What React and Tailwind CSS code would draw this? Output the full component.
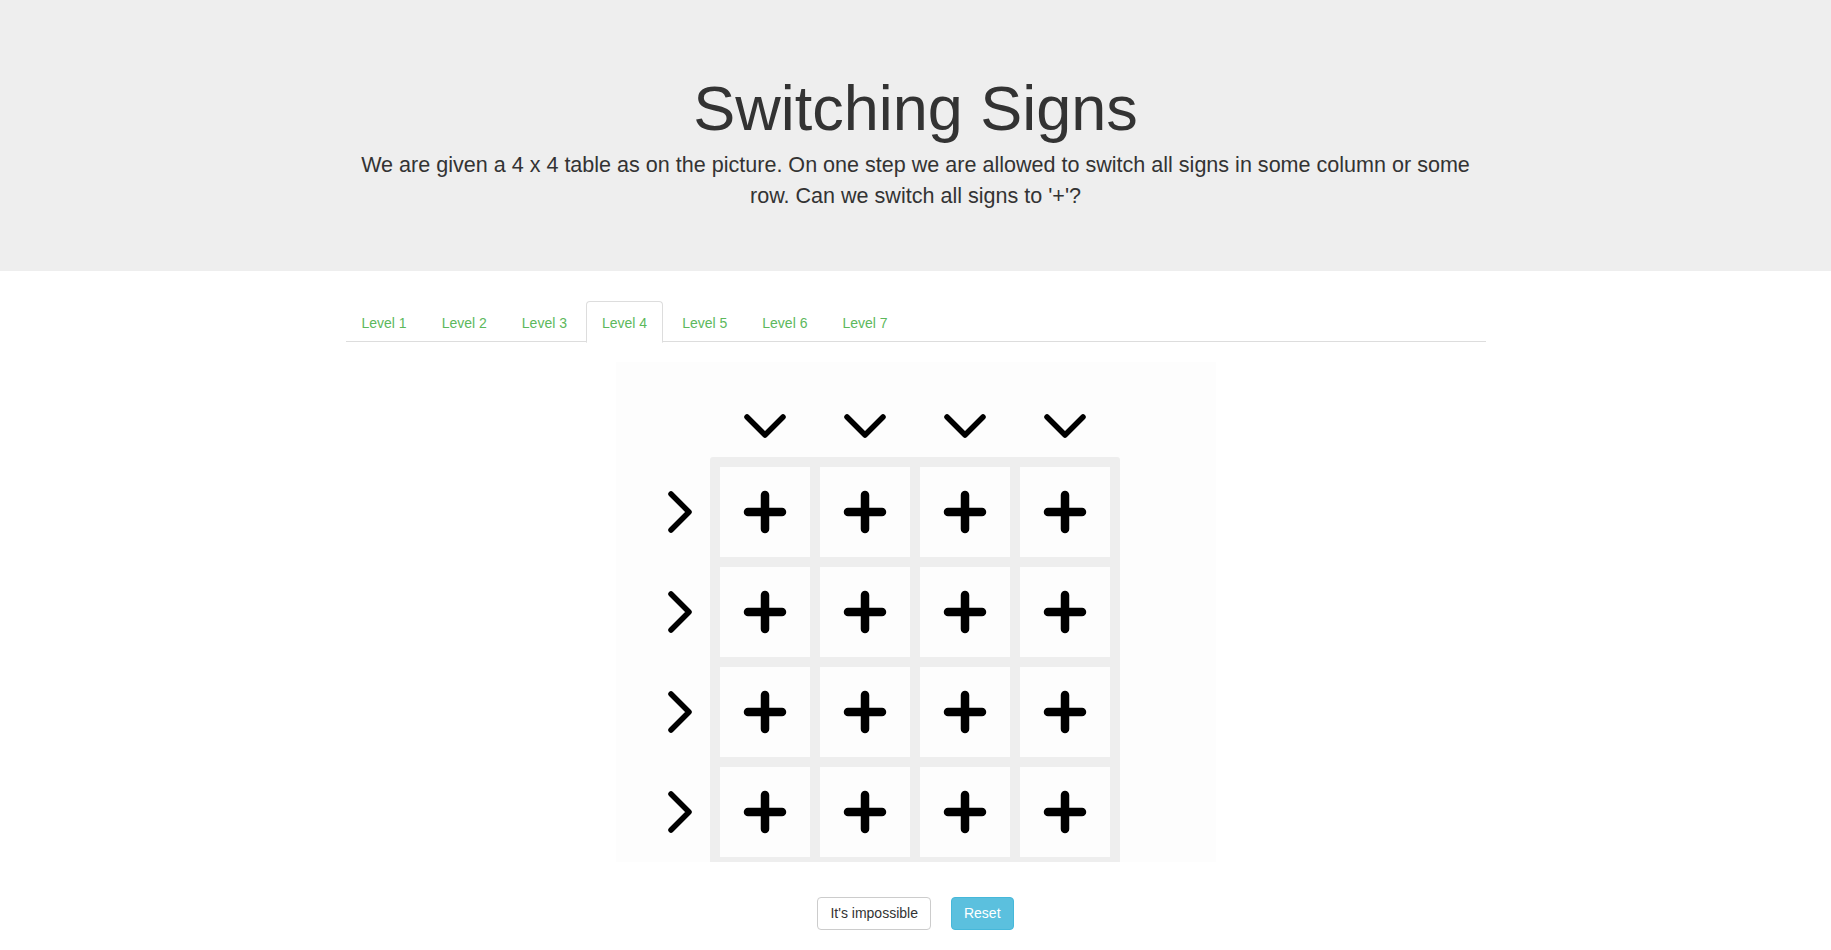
import React from "react";

function ChevronDown() {
  return (
    <svg width="48" height="30" viewBox="-24 -15 48 30" className="block">
      <path d="M-18 -9 L0 9 L18 -9" fill="none" stroke="#000" strokeWidth="5.5" strokeLinecap="round" strokeLinejoin="round" />
    </svg>
  );
}

function ChevronRight() {
  return (
    <svg width="30" height="48" viewBox="-15 -24 30 48" className="block">
      <path d="M-9 -18 L9 0 L-9 18" fill="none" stroke="#000" strokeWidth="5.5" strokeLinecap="round" strokeLinejoin="round" />
    </svg>
  );
}

function Plus() {
  return (
    <svg width="48" height="48" viewBox="-24 -24 48 48" className="block">
      <path d="M-17 0 L17 0 M0 -17 L0 17" fill="none" stroke="#000" strokeWidth="8.5" strokeLinecap="round" />
    </svg>
  );
}

export default function App() {
  const levels = [1, 2, 3, 4, 5, 6, 7];
  const idx = [0, 1, 2, 3];
  return (
    <div className="min-h-[950px] bg-white text-[#333] font-['Liberation_Sans',Arial,sans-serif]">
      <div className="bg-[#eeeeee] pt-[48px] pb-[45px] mb-[30px]">
        <div className="w-[1170px] mx-auto px-[15px] text-center">
          <h1 className="text-[63px] leading-[1.1] mt-[26px] mb-[7px] font-normal text-[#333]">Switching Signs</h1>
          <p className="text-[21.55px] leading-[30.3px] mb-[15px] text-[#333]">
            We are given a 4 x 4 table as on the picture. On one step we are allowed to switch all signs in some column or some row. Can we switch all signs to '+'?
          </p>
        </div>
      </div>
      <div className="w-[1170px] mx-auto px-[15px]">
        <ul className="flex border-b border-[#dddddd] h-[41px] text-[14px]">
          {levels.map((l) => (
            <li key={l} className="mr-[3px] -mb-px">
              <a
                className={
                  l === 4
                    ? "block px-[15px] pt-[11px] pb-[9px] leading-[20px] border border-[#dddddd] border-b-white bg-white rounded-t-[4px] text-[#5cb85c]"
                    : "block px-[15px] pt-[11px] pb-[9px] leading-[20px] border border-transparent rounded-t-[4px] text-[#5cb85c]"
                }
              >
                Level {l}
              </a>
            </li>
          ))}
        </ul>
        <div className="flex flex-col items-center">
          <div className="mt-[20px] w-[600px] h-[500px] bg-[#fdfdfd] overflow-hidden pl-[34px] pt-[34px]">
            <div className="flex">
              <div className="w-[60px]" />
              <div className="flex gap-[10px] px-[10px] h-[61px] items-center">
                {idx.map((i) => (
                  <div key={i} className="w-[90px] flex justify-center">
                    <ChevronDown />
                  </div>
                ))}
              </div>
            </div>
            <div className="flex">
              <div className="w-[60px] flex flex-col gap-[10px] pt-[10px]">
                {idx.map((i) => (
                  <div key={i} className="h-[90px] flex items-center justify-center">
                    <ChevronRight />
                  </div>
                ))}
              </div>
              <div className="bg-[#eeeeee] rounded-[3px] p-[10px] grid grid-cols-4 gap-[10px] w-[410px]">
                {idx.map((r) =>
                  idx.map((c) => (
                    <div key={r + "-" + c} className="w-[90px] h-[90px] bg-[#fdfdfd] flex items-center justify-center">
                      <Plus />
                    </div>
                  ))
                )}
              </div>
            </div>
          </div>
          <div className="mt-[35px] flex gap-[20px]">
            <button className="h-[33px] px-[12px] text-[14px] text-[#333] bg-white border border-[#cccccc] rounded-[4px]">It's impossible</button>
            <button className="h-[33px] px-[12px] text-[14px] text-white bg-[#5bc0de] border border-[#46b8da] rounded-[4px]">Reset</button>
          </div>
        </div>
      </div>
    </div>
  );
}
